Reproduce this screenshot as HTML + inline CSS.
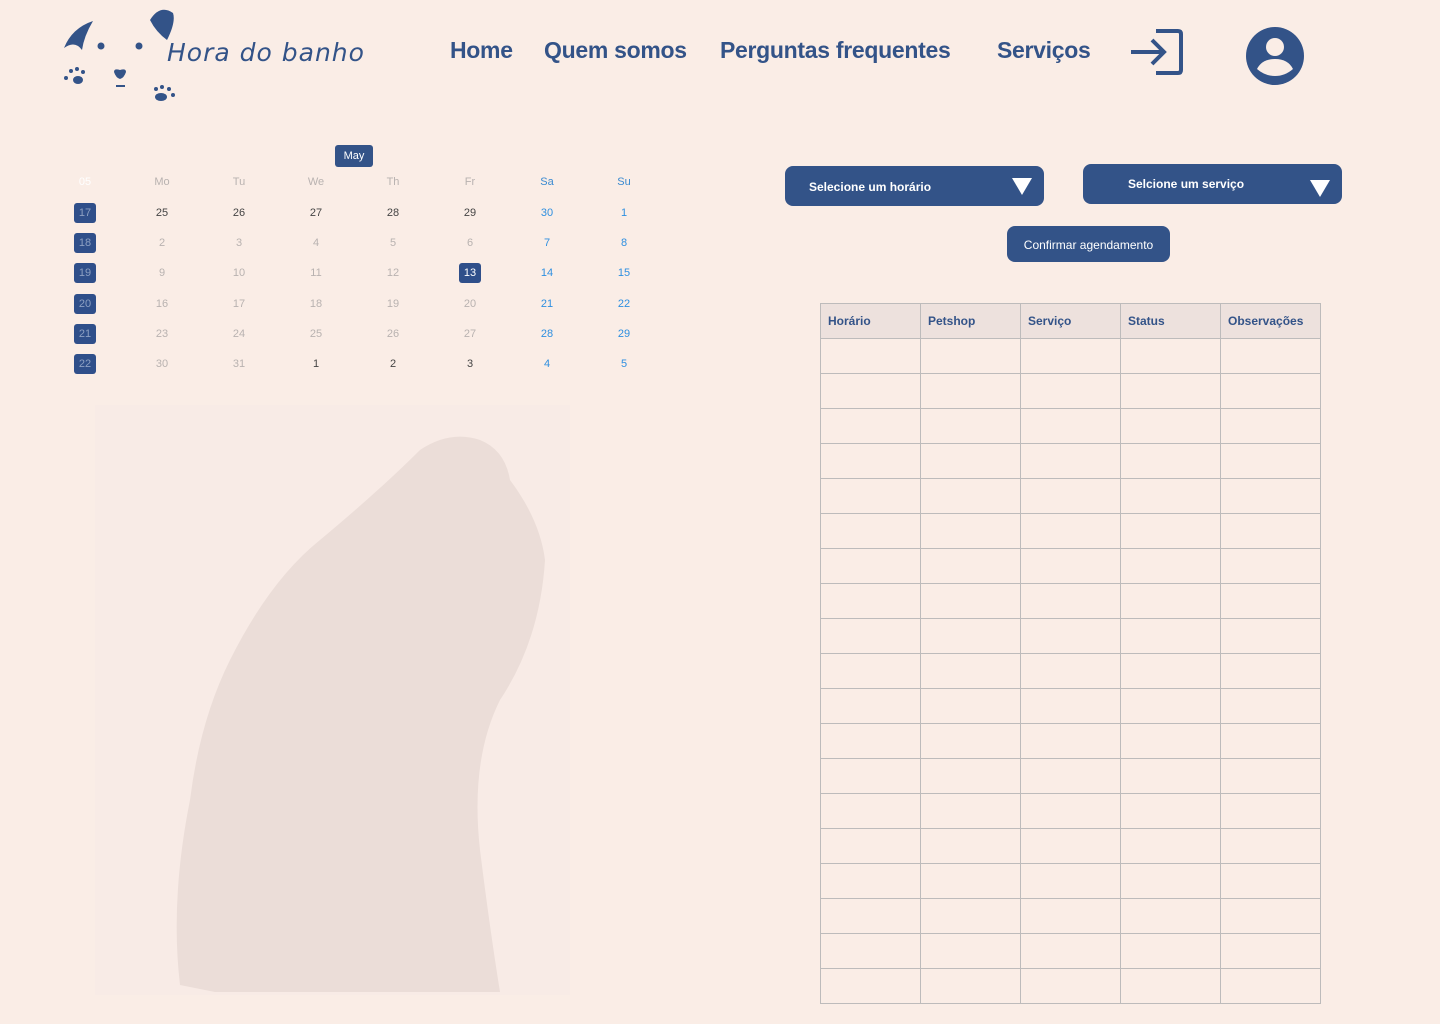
<!DOCTYPE html>
<html><head><meta charset="utf-8"><style>
body{margin:0;width:1440px;height:1024px;background:#FAEDE6;font-family:"Liberation Sans",sans-serif;position:relative;overflow:hidden}
.abs{position:absolute}
.nav{position:absolute;top:37px;font-size:23px;font-weight:bold;color:#335388;letter-spacing:-0.3px}
.cal{position:absolute;font-size:11px;width:40px;text-align:center;transform:translateX(-20px)}
.wk{position:absolute;left:74px;width:22px;height:20px;background:#2F4F8A;border-radius:3px;color:#8DA0C2;font-size:11px;text-align:center;line-height:20px}
.btn{position:absolute;background:#335388;color:#fff;border-radius:8px}
table{position:absolute;left:820px;top:303px;border-collapse:collapse;table-layout:fixed;width:500px}
td,th{box-sizing:border-box;width:100px;height:35px;border:1px solid #BDBBBB;padding:0 0 0 7px;text-align:left;font-size:12px;color:#335388}
th{background:#EDE1DD}
</style></head><body>
<svg class="abs" style="left:60px;top:8px" width="120" height="100" viewBox="60 8 120 100">
<path d="M64 48 Q72 28 93 21 Q84 36 82 50 Q75 40 64 48Z" fill="#335388"/>
<path d="M150 20 Q160 4 173 13 Q176 22 167 40 Q156 32 150 20Z" fill="#335388"/>
<circle cx="101" cy="46" r="3.5" fill="#335388"/><circle cx="139" cy="46" r="3.5" fill="#335388"/>
<path d="M114 72 Q114 68 120 70 Q126 68 126 72 Q124 78 120 79 Q116 78 114 72Z" fill="#335388"/>
<rect x="116" y="85" width="9" height="2" fill="#335388"/>
<g fill="#335388"><ellipse cx="78" cy="80" rx="5" ry="4"/><circle cx="71" cy="71" r="2"/><circle cx="77" cy="69" r="2"/><circle cx="83" cy="72" r="2"/><circle cx="66" cy="78" r="2"/>
<ellipse cx="161" cy="97" rx="6" ry="4"/><circle cx="156" cy="89" r="2"/><circle cx="162" cy="87" r="2"/><circle cx="169" cy="89" r="2"/><circle cx="173" cy="95" r="2"/></g>
</svg>
<div class="abs" style="left:167px;top:38px;font-family:'DejaVu Sans',sans-serif;font-style:italic;font-size:25px;color:#335388;letter-spacing:1px">Hora do banho</div>
<div class="nav" style="left:450px">Home</div>
<div class="nav" style="left:544px">Quem somos</div>
<div class="nav" style="left:720px">Perguntas&nbsp;frequentes</div>
<div class="nav" style="left:997px">Serviços</div>
<svg class="abs" style="left:1130px;top:28px" width="54" height="48" viewBox="0 0 54 48">
<path d="M26 3H48Q51 3 51 6V42Q51 45 48 45H26" fill="none" stroke="#335388" stroke-width="4"/>
<path d="M1 24H34M22 12L34 24L22 36" fill="none" stroke="#335388" stroke-width="4"/>
</svg>
<svg class="abs" style="left:1245px;top:26px" width="60" height="60" viewBox="0 0 60 60">
<circle cx="30" cy="30" r="29" fill="#335388"/><circle cx="30" cy="21" r="9" fill="#FAEDE6"/>
<path d="M12 43Q17 33 30 33Q43 33 48 43Q40 50 30 50Q20 50 12 43Z" fill="#FAEDE6"/>
</svg>
<div class="btn" style="left:335px;top:145px;width:38px;height:22px;border-radius:3px;font-size:11px;text-align:center;line-height:22px">May</div>
<div id="cal"></div>
<svg class="abs" style="left:95px;top:405px" width="475" height="590" viewBox="95 405 475 590">
<rect x="95" y="405" width="475" height="590" fill="#F8EBE6"/>
<path d="M180 985 Q170 900 190 800 Q200 720 230 660 Q270 580 320 540 Q380 490 420 450 Q450 430 480 440 Q505 450 510 480 Q540 520 545 560 Q540 640 500 700 Q470 760 480 850 Q490 930 500 992 L215 992 Z" fill="#EBDDD8"/>
</svg>
<div class="btn" style="left:785px;top:166px;width:259px;height:40px;font-size:12px;font-weight:bold"><span class="abs" style="left:24px;top:14px">Selecione um horário</span><svg class="abs" style="left:227px;top:12px" width="20" height="17"><path d="M0 0H20L10 17Z" fill="#fff"/></svg></div>
<div class="btn" style="left:1083px;top:164px;width:259px;height:40px;font-size:12px;font-weight:bold"><span class="abs" style="left:45px;top:13px">Selcione um serviço</span><svg class="abs" style="left:227px;top:16px" width="20" height="17"><path d="M0 0H20L10 17Z" fill="#fff"/></svg></div>
<div class="btn" style="left:1007px;top:226px;width:163px;height:36px;font-size:12px;text-align:center;line-height:38px">Confirmar agendamento</div>
<table id="t"><tr><th>Horário</th><th>Petshop</th><th>Serviço</th><th>Status</th><th>Observações</th></tr></table>
<script>
var t=document.getElementById('t');for(var i=0;i<19;i++){var r=t.insertRow();for(var j=0;j<5;j++)r.insertCell();}
var xs=[162,239,316,393,470,547,624],ys=[213,243,273,304,334,364];
var h='',hd=['Mo','Tu','We','Th','Fr','Sa','Su'];
h+='<div class="cal" style="left:85px;top:176px;color:#fff">05</div>';
hd.forEach(function(d,i){h+='<div class="cal" style="left:'+xs[i]+'px;top:176px;color:'+(i>4?'#3A8AD0':'#B8B2B0')+'">'+d+'</div>'});
var rows=[[25,26,27,28,29,30,1],[2,3,4,5,6,7,8],[9,10,11,12,13,14,15],[16,17,18,19,20,21,22],[23,24,25,26,27,28,29],[30,31,1,2,3,4,5]];
rows.forEach(function(r,ri){h+='<div class="wk" style="top:'+(ys[ri]-10)+'px">'+(17+ri)+'</div>';
r.forEach(function(n,ci){var c=ci>4?'#2E8FE0':(ri==0||(ri==5&&ci>=2)?'#444':'#B8B2B0');
if(ri==2&&ci==4)h+='<div class="abs" style="left:459px;top:263px;width:22px;height:20px;background:#2F4F8A;border-radius:3px;color:#fff;font-size:11px;text-align:center;line-height:20px">13</div>';
else h+='<div class="cal" style="left:'+xs[ci]+'px;top:'+(ys[ri]-6)+'px;color:'+c+'">'+n+'</div>'})});
document.getElementById('cal').innerHTML=h;
</script>
</body></html>
